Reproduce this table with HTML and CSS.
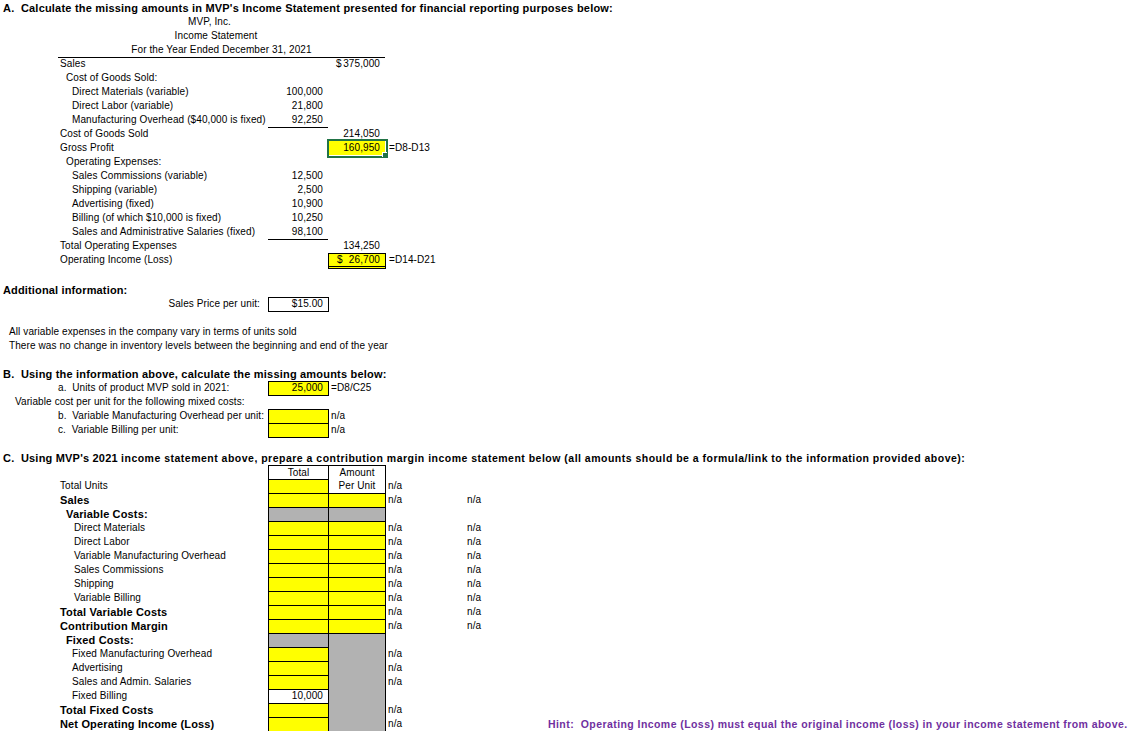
FILE: index.html
```html
<!DOCTYPE html>
<html>
<head>
<meta charset="utf-8">
<link rel="stylesheet" href="styles.css">
</head>
<body>
<div class="sheet">
  <div class="row"><div class="all title pl3">A.&nbsp; Calculate the missing amounts in MVP's Income Statement presented for financial reporting purposes below:</div></div>
  <div class="row"><div class="bd center sh1">MVP, Inc.</div></div>
  <div class="row"><div class="bd center sh2">Income Statement</div></div>
  <div class="row"><div class="bd center ul">For the Year Ended December 31, 2021</div></div>
  <div class="row"><div class="cb i0">Sales</div><div class="cd acct"><span>$</span><span>375,000</span></div></div>
  <div class="row"><div class="cb i1">Cost of Goods Sold:</div></div>
  <div class="row"><div class="cb i2">Direct Materials (variable)</div><div class="cc num">100,000</div></div>
  <div class="row"><div class="cb i2">Direct Labor (variable)</div><div class="cc num">21,800</div></div>
  <div class="row"><div class="cb i2">Manufacturing Overhead ($40,000 is fixed)</div><div class="cc num ul">92,250</div></div>
  <div class="row"><div class="cb i0">Cost of Goods Sold</div><div class="cd num">214,050</div></div>
  <div class="row"><div class="cb i0">Gross Profit</div><div class="cd num yel sel">160,950<span class="handle"></span></div><div class="ce note">=D8-D13</div></div>
  <div class="row"><div class="cb i1">Operating Expenses:</div></div>
  <div class="row"><div class="cb i2">Sales Commissions (variable)</div><div class="cc num">12,500</div></div>
  <div class="row"><div class="cb i2">Shipping (variable)</div><div class="cc num">2,500</div></div>
  <div class="row"><div class="cb i2">Advertising (fixed)</div><div class="cc num">10,900</div></div>
  <div class="row"><div class="cb i2">Billing (of which $10,000 is fixed)</div><div class="cc num">10,250</div></div>
  <div class="row"><div class="cb i2">Sales and Administrative Salaries (fixed)</div><div class="cc num ul">98,100</div></div>
  <div class="row"><div class="cb i0">Total Operating Expenses</div><div class="cd num">134,250</div></div>
  <div class="row tall"><div class="cb i0">Operating Income (Loss)</div><div class="cd acct yel box dbl"><span>$</span><span>26,700</span></div><div class="ce note">=D14-D21</div></div>
  <div class="row"></div>
  <div class="row"><div class="all bold pl3">Additional information:</div></div>
  <div class="row"><div class="cb right">Sales Price per unit:</div><div class="cc num box">$15.00</div></div>
  <div class="row"></div>
  <div class="row"><div class="all pl9">All variable expenses in the company vary in terms of units sold</div></div>
  <div class="row"><div class="all pl9">There was no change in inventory levels between the beginning and end of the year</div></div>
  <div class="row"></div>
  <div class="row"><div class="all title pl3">B.&nbsp; Using the information above, calculate the missing amounts below:</div></div>
  <div class="row"><div class="cb ia">a.&nbsp; Units of product MVP sold in 2021:</div><div class="cc num yel box">25,000</div><div class="cd note2">=D8/C25</div></div>
  <div class="row"><div class="all pl15">Variable cost per unit for the following mixed costs:</div></div>
  <div class="row"><div class="cb ia">b.&nbsp; Variable Manufacturing Overhead per unit:</div><div class="cc yel box"></div><div class="cd note2">n/a</div></div>
  <div class="row"><div class="cb ia">c.&nbsp; Variable Billing per unit:</div><div class="cc yel box"></div><div class="cd note2">n/a</div></div>
  <div class="row"></div>
  <div class="row"><div class="all title pl3">C.&nbsp; Using MVP's 2021 <span class="narrow">income statement above, prepare a contribution margin income statement below (all amounts should be a formula/link to the information provided above):</span></div></div>
  <div class="row"><div class="cc box hd">Total</div><div class="cd box-top hd">Amount</div></div>
  <div class="row"><div class="cb i0">Total Units</div><div class="cc yel box"></div><div class="cd box-bot hd">Per Unit</div><div class="ce na">n/a</div></div>
  <div class="row"><div class="cb i0 bold">Sales</div><div class="cc yel box"></div><div class="cd yel box"></div><div class="ce na">n/a</div><div class="cf na">n/a</div></div>
  <div class="row"><div class="cb i1 bold">Variable Costs:</div><div class="cc gray box"></div><div class="cd gray box"></div></div>
  <div class="row"><div class="cb i3">Direct Materials</div><div class="cc yel box"></div><div class="cd yel box"></div><div class="ce na">n/a</div><div class="cf na">n/a</div></div>
  <div class="row"><div class="cb i3">Direct Labor</div><div class="cc yel box"></div><div class="cd yel box"></div><div class="ce na">n/a</div><div class="cf na">n/a</div></div>
  <div class="row"><div class="cb i3">Variable Manufacturing Overhead</div><div class="cc yel box"></div><div class="cd yel box"></div><div class="ce na">n/a</div><div class="cf na">n/a</div></div>
  <div class="row"><div class="cb i3">Sales Commissions</div><div class="cc yel box"></div><div class="cd yel box"></div><div class="ce na">n/a</div><div class="cf na">n/a</div></div>
  <div class="row"><div class="cb i3">Shipping</div><div class="cc yel box"></div><div class="cd yel box"></div><div class="ce na">n/a</div><div class="cf na">n/a</div></div>
  <div class="row"><div class="cb i3">Variable Billing</div><div class="cc yel box"></div><div class="cd yel box"></div><div class="ce na">n/a</div><div class="cf na">n/a</div></div>
  <div class="row"><div class="cb i0 bold">Total Variable Costs</div><div class="cc yel box"></div><div class="cd yel box"></div><div class="ce na">n/a</div><div class="cf na">n/a</div></div>
  <div class="row"><div class="cb i0 bold">Contribution Margin</div><div class="cc yel box"></div><div class="cd yel box"></div><div class="ce na">n/a</div><div class="cf na">n/a</div></div>
  <div class="row"><div class="cb i1 bold">Fixed Costs:</div><div class="cc gray box"></div><div class="cd gray box-top"></div></div>
  <div class="row"><div class="cb i2">Fixed Manufacturing Overhead</div><div class="cc yel box"></div><div class="cd gray box-mid"></div><div class="ce na">n/a</div></div>
  <div class="row"><div class="cb i2">Advertising</div><div class="cc yel box"></div><div class="cd gray box-mid"></div><div class="ce na">n/a</div></div>
  <div class="row"><div class="cb i2">Sales and Admin. Salaries</div><div class="cc yel box"></div><div class="cd gray box-mid"></div><div class="ce na">n/a</div></div>
  <div class="row"><div class="cb i2">Fixed Billing</div><div class="cc num box">10,000</div><div class="cd gray box-mid"></div></div>
  <div class="row"><div class="cb i0 bold">Total Fixed Costs</div><div class="cc yel box"></div><div class="cd gray box-mid"></div><div class="ce na">n/a</div></div>
  <div class="row"><div class="cb i0 bold">Net Operating Income (Loss)</div><div class="cc yel box"></div><div class="cd gray box-bot"></div><div class="ce na">n/a</div><div class="cf hint">Hint:&nbsp; Operating Income (Loss) must equal the original income (loss) in your income statement from above.</div></div>
</div>
</body>
</html>
```

FILE: styles.css
```css
html, body {
  margin: 0;
  padding: 0;
  background: #ffffff;
}

body {
  font-family: "Liberation Sans", Arial, sans-serif;
  font-size: 10px;
  letter-spacing: 0.1px;
  color: #000000;
}

.sheet {
  padding-top: 1px;
}

.row {
  display: grid;
  grid-template-columns: 58px 210px 60px 57px 80px 1fr;
  height: 14px;
  line-height: 14px;
  white-space: nowrap;
}

.row.tall {
  height: 16px;
}

.row > div {
  grid-row: 1;
  min-width: 0;
  box-sizing: border-box;
}

.all { grid-column: 1 / -1; }
.bd { grid-column: 2 / 5; }
.cb { grid-column: 2; }
.cc { grid-column: 3; }
.cd { grid-column: 4; }
.ce { grid-column: 5; }
.cf { grid-column: 6; }

.title {
  font-weight: bold;
  font-size: 11px;
  letter-spacing: 0.2px;
}

.narrow {
  font-size: 10.5px;
  letter-spacing: 0.49px;
}

.bold {
  font-weight: bold;
  font-size: 11px;
  letter-spacing: 0.15px;
}

.pl3 { padding-left: 3px; }
.pl9 { padding-left: 9px; }
.pl15 { padding-left: 15px; }

.center { text-align: center; }
.sh1 { padding-right: 24px; }
.sh2 { padding-right: 11px; }

.ul { border-bottom: 1px solid #000; }

.i0 { padding-left: 2px; }
.i1 { padding-left: 8px; }
.i2 { padding-left: 14px; }
.i3 { padding-left: 16px; }
.ia { padding-left: 0; }

.right {
  text-align: right;
  padding-right: 8px;
}

.num {
  text-align: right;
  padding-right: 5px;
}

.acct {
  display: flex;
  justify-content: space-between;
  padding-left: 8px;
  padding-right: 5px;
}

.note { padding-left: 4px; }
.note2 { padding-left: 3px; }
.na { padding-left: 3px; }
.cf.na { padding-left: 2px; }

.yel { background: #ffff00; }
.gray { background: #b2b2b2; }

.box {
  border: 1px solid #000;
  margin: 0 -1px -1px 0;
  line-height: 12px;
}

.box-top {
  border: 1px solid #000;
  border-bottom: 0;
  margin-right: -1px;
  line-height: 13px;
}

.box-mid {
  border-left: 1px solid #000;
  border-right: 1px solid #000;
  margin-right: -1px;
}

.box-bot {
  border: 1px solid #000;
  border-top: 0;
  margin: 0 -1px -1px 0;
}

.hd {
  background: #ffffff;
  text-align: center;
}

.box.hd { line-height: 13px; }

.dbl {
  border-bottom: 3px double #000;
  margin-bottom: 0;
  line-height: 12px;
}

.sel {
  position: relative;
}

.sel::after {
  content: "";
  position: absolute;
  left: -1px;
  top: -2px;
  right: -3px;
  bottom: -3px;
  border: 2px solid #217346;
}

.handle {
  position: absolute;
  right: -3px;
  bottom: -3px;
  width: 5px;
  height: 5px;
  background: #217346;
  box-shadow: -1px -1px 0 #ffffff;
  z-index: 2;
}

.hint {
  padding-left: 83px;
  color: #7030a0;
  font-weight: bold;
  font-size: 10.5px;
  letter-spacing: 0.43px;
}
```
